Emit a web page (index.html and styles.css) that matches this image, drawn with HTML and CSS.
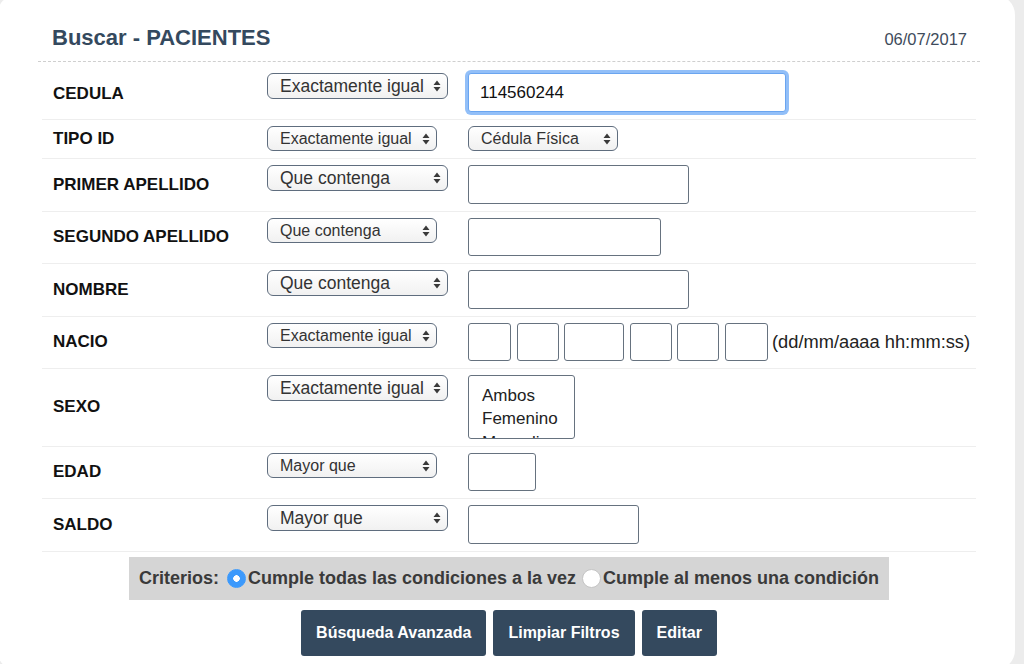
FILE: index.html
```html
<!DOCTYPE html>
<html lang="es">
<head>
    <meta charset="UTF-8">
    <title>Buscar - PACIENTES</title>
    <link rel="stylesheet" href="styles.css">
</head>
<body>
<div class="card">
    <div class="head">
        <h1>Buscar - PACIENTES</h1>
        <span class="date">06/07/2017</span>
    </div>
    <form class="search">
        <table class="filters">
            <tr>
                <th>CEDULA</th>
                <td class="op">
                    <span class="pick wide">
                        <select name="op_cedula"><option>Exactamente igual</option><option>Que contenga</option></select>
                        <svg class="arrows" width="8" height="12" viewBox="0 0 8 12"><path d="M0.5 5 L4 0.5 L7.5 5 Z M0.5 7 L4 11.5 L7.5 7 Z"/></svg>
                    </span>
                </td>
                <td><input class="field focus" style="width: 318px" name="cedula" value="114560244"></td>
            </tr>
            <tr>
                <th>TIPO ID</th>
                <td class="op">
                    <span class="pick narrow">
                        <select name="op_tipo"><option>Exactamente igual</option></select>
                        <svg class="arrows" width="8" height="12" viewBox="0 0 8 12"><path d="M0.5 5 L4 0.5 L7.5 5 Z M0.5 7 L4 11.5 L7.5 7 Z"/></svg>
                    </span>
                </td>
                <td>
                    <span class="pick tipo">
                        <select name="tipo"><option>Cédula Física</option><option>Cédula Jurídica</option></select>
                        <svg class="arrows" width="8" height="12" viewBox="0 0 8 12"><path d="M0.5 5 L4 0.5 L7.5 5 Z M0.5 7 L4 11.5 L7.5 7 Z"/></svg>
                    </span>
                </td>
            </tr>
            <tr>
                <th>PRIMER APELLIDO</th>
                <td class="op">
                    <span class="pick wide">
                        <select name="op_ape1"><option>Que contenga</option></select>
                        <svg class="arrows" width="8" height="12" viewBox="0 0 8 12"><path d="M0.5 5 L4 0.5 L7.5 5 Z M0.5 7 L4 11.5 L7.5 7 Z"/></svg>
                    </span>
                </td>
                <td><input class="field" style="width: 221px" name="ape1"></td>
            </tr>
            <tr>
                <th>SEGUNDO APELLIDO</th>
                <td class="op">
                    <span class="pick narrow">
                        <select name="op_ape2"><option>Que contenga</option></select>
                        <svg class="arrows" width="8" height="12" viewBox="0 0 8 12"><path d="M0.5 5 L4 0.5 L7.5 5 Z M0.5 7 L4 11.5 L7.5 7 Z"/></svg>
                    </span>
                </td>
                <td><input class="field short" style="width: 193px" name="ape2"></td>
            </tr>
            <tr>
                <th>NOMBRE</th>
                <td class="op">
                    <span class="pick wide">
                        <select name="op_nombre"><option>Que contenga</option></select>
                        <svg class="arrows" width="8" height="12" viewBox="0 0 8 12"><path d="M0.5 5 L4 0.5 L7.5 5 Z M0.5 7 L4 11.5 L7.5 7 Z"/></svg>
                    </span>
                </td>
                <td><input class="field" style="width: 221px" name="nombre"></td>
            </tr>
            <tr>
                <th>NACIO</th>
                <td class="op">
                    <span class="pick narrow">
                        <select name="op_nacio"><option>Exactamente igual</option></select>
                        <svg class="arrows" width="8" height="12" viewBox="0 0 8 12"><path d="M0.5 5 L4 0.5 L7.5 5 Z M0.5 7 L4 11.5 L7.5 7 Z"/></svg>
                    </span>
                </td>
                <td>
                    <div class="date-parts">
                        <input class="field short" style="width: 43px" name="dd">
                        <input class="field short" style="width: 42px" name="mm">
                        <input class="field short" style="width: 60px" name="aaaa">
                        <input class="field short" style="width: 42px" name="hh">
                        <input class="field short" style="width: 42px" name="mi">
                        <input class="field short" style="width: 43px" name="ss">
                        <span class="hint">(dd/mm/aaaa hh:mm:ss)</span>
                    </div>
                </td>
            </tr>
            <tr>
                <th>SEXO</th>
                <td class="op">
                    <span class="pick wide">
                        <select name="op_sexo"><option>Exactamente igual</option></select>
                        <svg class="arrows" width="8" height="12" viewBox="0 0 8 12"><path d="M0.5 5 L4 0.5 L7.5 5 Z M0.5 7 L4 11.5 L7.5 7 Z"/></svg>
                    </span>
                </td>
                <td>
                    <select class="list" name="sexo" multiple>
                        <option>Ambos</option>
                        <option>Femenino</option>
                        <option>Masculino</option>
                    </select>
                </td>
            </tr>
            <tr>
                <th>EDAD</th>
                <td class="op">
                    <span class="pick narrow">
                        <select name="op_edad"><option>Mayor que</option></select>
                        <svg class="arrows" width="8" height="12" viewBox="0 0 8 12"><path d="M0.5 5 L4 0.5 L7.5 5 Z M0.5 7 L4 11.5 L7.5 7 Z"/></svg>
                    </span>
                </td>
                <td><input class="field short" style="width: 68px" name="edad"></td>
            </tr>
            <tr>
                <th>SALDO</th>
                <td class="op">
                    <span class="pick wide">
                        <select name="op_saldo"><option>Mayor que</option></select>
                        <svg class="arrows" width="8" height="12" viewBox="0 0 8 12"><path d="M0.5 5 L4 0.5 L7.5 5 Z M0.5 7 L4 11.5 L7.5 7 Z"/></svg>
                    </span>
                </td>
                <td><input class="field" style="width: 171px" name="saldo"></td>
            </tr>
        </table>
        <div class="criteria">
            <span class="criteria-title">Criterios:</span>
            <label><input type="radio" name="criterio" checked>Cumple todas las condiciones a la vez</label>
            <label><input type="radio" name="criterio">Cumple al menos una condición</label>
        </div>
        <div class="actions">
            <button type="button" class="btn">Búsqueda Avanzada</button>
            <button type="reset" class="btn">Limpiar Filtros</button>
            <button type="button" class="btn">Editar</button>
        </div>
    </form>
</div>
</body>
</html>
```

FILE: styles.css
```css
html, body {
    overflow: hidden;
}
body {
    margin: 0;
    background: #ececec;
    font-family: "Liberation Sans", Arial, sans-serif;
    color: #222;
}
.card {
    margin: -5px 0 0 -3px;
    width: 1018px;
    height: 675px;
    box-sizing: border-box;
    padding: 0 35px 0 41px;
    background: #fff;
    border-radius: 20px;
}
.head {
    display: flex;
    justify-content: space-between;
    align-items: baseline;
    padding: 30px 13px 10px 14px;
    border-bottom: 1px dashed #cfcfcf;
}
.head h1 {
    margin: 0;
    font-size: 22px;
    line-height: 26px;
    color: #34495e;
}
.date {
    font-size: 16.5px;
    color: #3e4b5b;
}
.filters {
    margin: 0 4px;
    width: 934px;
    border-collapse: collapse;
}
.filters tr + tr {
    border-top: 1px solid #eeeeee;
}
.filters tr:last-child {
    border-bottom: 1px solid #eeeeee;
}
.filters th,
.filters td {
    padding: 6px 0 7px;
    vertical-align: top;
    text-align: left;
}
.filters tr:first-child th,
.filters tr:first-child td {
    padding-top: 11px;
}
.filters tr:first-child th {
    padding-top: 13px;
}
.filters th {
    width: 214px;
    padding-left: 11px;
    vertical-align: middle;
    font-size: 17px;
    color: #111;
}
.filters .op {
    width: 201px;
}
.pick {
    position: relative;
    display: inline-block;
}
.pick select {
    appearance: none;
    -webkit-appearance: none;
    display: block;
    box-sizing: border-box;
    margin: 0;
    padding: 0 0 0 12px;
    border: 1px solid #5f6d7e;
    border-radius: 6px;
    background: linear-gradient(#ffffff, #f1f1f1);
    font-family: "Liberation Sans", Arial, sans-serif;
    color: #333;
}
.pick.wide select {
    width: 181px;
    height: 26px;
    font-size: 17.5px;
}
.pick.narrow select {
    width: 170px;
    height: 25px;
    font-size: 16px;
}
.pick.tipo select {
    width: 150px;
    height: 25px;
    font-size: 16px;
}
.arrows {
    position: absolute;
    right: 7px;
    top: 50%;
    transform: translateY(-50%);
    fill: #3a3a3a;
    pointer-events: none;
}
.field {
    display: block;
    box-sizing: border-box;
    margin: 0;
    height: 39px;
    padding: 0 11px;
    border: 1px solid #66727f;
    border-radius: 3px;
    font-family: "Liberation Sans", Arial, sans-serif;
    font-size: 17px;
    color: #111;
    background: #fff;
}
.field.short {
    height: 38px;
}
.field.focus {
    border-color: #6aa5f0;
    box-shadow: 0 0 0 3px rgba(88, 157, 245, 0.65);
    outline: none;
}
.date-parts {
    display: flex;
    align-items: center;
    gap: 5.5px;
}
.hint {
    margin-left: -1px;
    font-size: 18.3px;
    color: #222;
}
.list {
    display: block;
    box-sizing: border-box;
    width: 107px;
    height: 64px;
    margin: 0;
    padding: 8px 0 0 11px;
    border: 1px solid #66727f;
    border-radius: 3px;
    overflow: hidden;
    font-family: "Liberation Sans", Arial, sans-serif;
    font-size: 17px;
    color: #222;
}
.list option {
    padding: 2px 2px 1px;
}
.criteria {
    display: flex;
    justify-content: center;
    align-items: center;
    width: 760px;
    height: 43px;
    margin: 5px auto 0;
    background: #d5d5d5;
    font-size: 18px;
    font-weight: bold;
    color: #3a3a3a;
}
.criteria-title {
    margin-right: 8px;
}
.criteria label {
    display: flex;
    align-items: center;
}
.criteria label + label {
    margin-left: 6px;
}
.criteria input {
    appearance: none;
    -webkit-appearance: none;
    width: 19px;
    height: 19px;
    margin: 0 2px 0 0;
    border: 1px solid #c4c4c4;
    border-radius: 50%;
    background: #fff;
}
.criteria input:checked {
    border-color: #3b99fc;
    background: radial-gradient(circle, #fff 0 3px, #3b99fc 3.5px);
}
.actions {
    display: flex;
    justify-content: center;
    gap: 7px;
    margin-top: 10px;
}
.btn {
    height: 46px;
    padding: 0 15px;
    border: none;
    border-radius: 3px;
    background: #34495e;
    color: #fff;
    font-family: "Liberation Sans", Arial, sans-serif;
    font-size: 16px;
    font-weight: bold;
}
```
